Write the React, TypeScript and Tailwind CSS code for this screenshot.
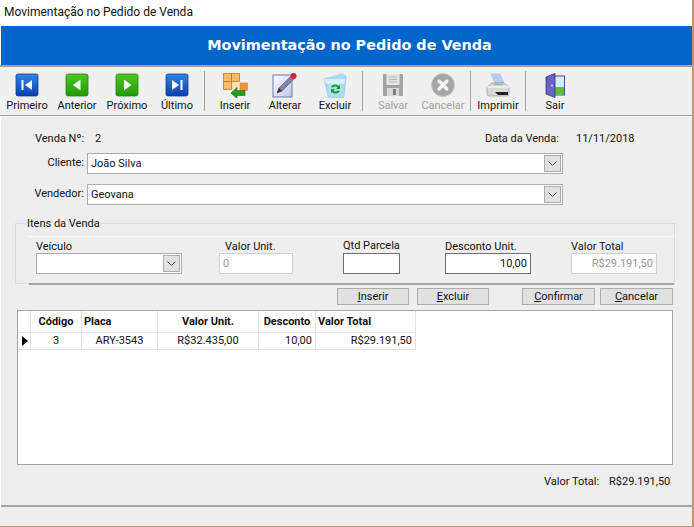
import type { ReactNode } from 'react';

const Nav = ({ color, dir }: { color: 'blue' | 'green'; dir: 'first' | 'prev' | 'next' | 'last' }) => {
  const id = color + dir;
  const top = color === 'blue' ? '#2f86e6' : '#4fc81e';
  const bottom = color === 'blue' ? '#0a3fb0' : '#1f9a08';
  const edge = color === 'blue' ? '#123f8e' : '#2a7f14';
  return (
    <svg width="24" height="24" viewBox="0 0 24 24">
      <defs>
        <linearGradient id={id} x1="0" y1="0" x2="0" y2="1">
          <stop offset="0" stopColor={top} />
          <stop offset="1" stopColor={bottom} />
        </linearGradient>
      </defs>
      <rect x="1" y="1" width="22" height="22" rx="2" fill={`url(#${id})`} stroke={edge} strokeWidth="0.8" />
      {dir === 'first' && <path d="M6.500 7h2v10h-2zM17 7v10l-7-5z" fill="#fff" />}
      {dir === 'prev' && <path d="M15.500 6.500v11L8 12z" fill="#f2fff0" />}
      {dir === 'next' && <path d="M9 6.500v11l7.500-5.500z" fill="#f2fff0" />}
      {dir === 'last' && <path d="M7 7v10l7-5zM15.500 7h2v10h-2z" fill="#fff" />}
    </svg>
  );
};

const InserirIcon = () => (
  <svg width="25" height="25" viewBox="0 0 25 25">
    <path d="M0.500 0.500h8v8h-8zM8.500 0.500h8v8h-8zM0.500 8.500h8v8h-8z" fill="#f8bc68" stroke="#b5772a" strokeWidth="0.8" />
    <rect x="9" y="9" width="7" height="7" fill="#fce0b0" />
    <rect x="17" y="10" width="7.500" height="7.500" fill="#ef9431" stroke="#d8842a" strokeWidth="0.6" />
    <path d="M8 20l6-5.500v3h8v5h-8v3z" fill="#2c9a22" stroke="#146a10" strokeWidth="0.6" />
  </svg>
);

const AlterarIcon = () => (
  <svg width="26" height="26" viewBox="0 0 26 26">
    <defs>
      <linearGradient id="sheet" x1="0" y1="0" x2="1" y2="1">
        <stop offset="0" stopColor="#fdfdff" />
        <stop offset="1" stopColor="#b8c8ec" />
      </linearGradient>
    </defs>
    <rect x="1" y="3" width="19" height="22" fill="url(#sheet)" stroke="#6a7aa8" />
    <path d="M5 21l2-5L19 4l3 3L10 19z" fill="#8c7fa8" stroke="#5a5070" strokeWidth="0.6" />
    <path d="M5 21l2-5 3 3z" fill="#3d3020" />
    <circle cx="21.500" cy="4" r="3" fill="#d8262a" />
  </svg>
);

const ExcluirIcon = () => (
  <svg width="24" height="25" viewBox="0 0 24 25">
    <path d="M1 6l18-5 4 2-2 20a2 2 0 0 1-2 2H7a2 2 0 0 1-2-2z" fill="#a9dcf5" stroke="#8cc4e4" strokeWidth="0.6" />
    <path d="M1 6h21l-1 5H3z" fill="#d6f0fb" />
    <path d="M8 14a5 5 0 0 1 8-1l1-1v4h-4l1.500-1.500a3 3 0 0 0-4.500 0z" fill="#1e9a2a" />
    <path d="M17 18a5 5 0 0 1-8 1l-1 1v-4h4l-1.500 1.500a3 3 0 0 0 4.500 0z" fill="#1e9a2a" />
  </svg>
);

const SalvarIcon = () => (
  <svg width="22" height="24" viewBox="0 0 22 24">
    <path d="M1 2a1 1 0 0 1 1-1h18a1 1 0 0 1 1 1v20a1 1 0 0 1-1 1H2a1 1 0 0 1-1-1z" fill="#a3a3a3" />
    <rect x="4.500" y="1" width="13" height="11" fill="#e4e4e4" />
    <path d="M7 4h8M7 6.500h8M7 9h8" stroke="#b5b5b5" />
    <rect x="5" y="15" width="12" height="8" fill="#d8d8d8" />
    <rect x="11" y="16" width="3" height="6" fill="#808080" />
  </svg>
);

const CancelarIcon = () => (
  <svg width="24" height="24" viewBox="0 0 24 24">
    <circle cx="12" cy="12" r="11.500" fill="#a6a6a6" stroke="#c8c8c8" />
    <path d="M8 8l8 8M16 8l-8 8" stroke="#f4f4f4" strokeWidth="3.200" strokeLinecap="round" />
  </svg>
);

const ImprimirIcon = () => (
  <svg width="24" height="25" viewBox="0 0 24 25">
    <path d="M5 1l9 0 4 9H9z" fill="#b9cdf2" stroke="#9db4e0" strokeWidth="0.5" />
    <path d="M1 14l5-4h12l5 4v7a2 2 0 0 1-2 2H3a2 2 0 0 1-2-2z" fill="#d8d8d8" stroke="#8a8a8a" strokeWidth="0.6" />
    <path d="M1 14h22" stroke="#f4f4f4" strokeWidth="1.500" />
    <path d="M9 19h13v3H12z" fill="#222" />
    <rect x="8" y="10.500" width="9" height="1.500" fill="#7fcf8a" />
  </svg>
);

const SairIcon = () => (
  <svg width="20" height="25" viewBox="0 0 20 25">
    <rect x="9" y="3" width="10.500" height="19" fill="#cfeffa" stroke="#4c4c8c" />
    <rect x="10" y="14" width="9" height="7.500" fill="#62c22c" />
    <path d="M1 4l9-3.500v24L1 21z" fill="#6a62c6" stroke="#35307a" strokeWidth="0.8" />
    <circle cx="7" cy="12.500" r="1" fill="#e8e8ff" />
  </svg>
);

const ToolButton = ({ label, icon, off }: { label: string; icon: ReactNode; off?: boolean }) => (
  <div className={`w-[50px] h-full flex flex-col items-center ${off ? 'text-[#a0a0a0]' : 'text-[#111]'}`}>
    <div className="h-[28px] mt-[4px] flex items-center justify-center">{icon}</div>
    <span className="text-[11px] leading-[13px] mt-0 whitespace-nowrap">{label}</span>
  </div>
);

const Sep = () => <div className="w-px h-[40px] bg-[#a0a0a0] mt-[4px] mx-[2px]" />;

const Combo = ({ value, className }: { value: string; className: string }) => (
  <div className={`flex items-center border border-[#acacac] bg-white ${className}`}>
    <span className="flex-1 pl-[3px] pt-[2px] text-[11px] text-[#111]">{value}</span>
    <div className="w-[17px] h-[17px] mr-[1px] border border-[#acacac] bg-[#e1e1e1] flex items-center justify-center">
      <svg width="9" height="5" viewBox="0 0 9 5" fill="none">
        <path d="M0.500 0.500l4 4 4-4" stroke="#444" />
      </svg>
    </div>
  </div>
);

const Btn = ({ u, rest, className }: { u: string; rest: string; className: string }) => (
  <div className={`h-[17px] border border-[#adadad] bg-[#e1e1e1] text-[11px] leading-[15px] text-[#111] text-center ${className}`}>
    <span className="underline">{u}</span>
    {rest}
  </div>
);

const Th = ({ w, children, left }: { w: string; children: string; left?: boolean }) => (
  <div className={`${w} h-full border-r border-[#e3e3e3] font-bold text-[11px] leading-[22px] text-[#111] ${left ? 'pl-[2px]' : 'text-center'}`}>
    {children}
  </div>
);

const Td = ({ w, children, right }: { w: string; children: string; right?: boolean }) => (
  <div className={`${w} h-full border-r border-[#e3e3e3] text-[11px] leading-[16px] text-[#111] ${right ? 'text-right pr-[3px]' : 'text-center'}`}>
    {children}
  </div>
);

export default function App() {
  return (
    <div className="w-[694px] h-[527px] flex flex-col overflow-hidden bg-white border-r-2 border-b border-[#c8946c] font-['Roboto','Liberation_Sans',sans-serif]">
      <div className="h-[26px] pl-[4px] text-[12px] leading-[24px] text-[#111]">Movimentação no Pedido de Venda</div>

      <div className="h-[39px] ml-[1px] pl-[6px] bg-[#0066cc] flex items-center justify-center text-white font-bold text-[14.4px] font-['DejaVu_Sans',sans-serif]">
        Movimentação no Pedido de Venda
      </div>

      <div className="h-[51px] flex pl-[2px] bg-[#f0f0f0] border-t-2 border-b border-t-[#a0a0a0] border-b-[#a0a0a0]">
        <ToolButton label="Primeiro" icon={<Nav color="blue" dir="first" />} />
        <ToolButton label="Anterior" icon={<Nav color="green" dir="prev" />} />
        <ToolButton label="Próximo" icon={<Nav color="green" dir="next" />} />
        <ToolButton label="Último" icon={<Nav color="blue" dir="last" />} />
        <Sep />
        <div className="w-[3px]" />
        <ToolButton label="Inserir" icon={<InserirIcon />} />
        <ToolButton label="Alterar" icon={<AlterarIcon />} />
        <ToolButton label="Excluir" icon={<ExcluirIcon />} />
        <Sep />
        <div className="w-[3px]" />
        <ToolButton label="Salvar" icon={<SalvarIcon />} off />
        <ToolButton label="Cancelar" icon={<CancelarIcon />} off />
        <Sep />
        <ToolButton label="Imprimir" icon={<ImprimirIcon />} />
        <Sep />
        <div className="w-[2px]" />
        <ToolButton label="Sair" icon={<SairIcon />} />
      </div>

      <div className="h-[390px] ml-[1px] mt-[1px] bg-[#eeeeee] border-b-2 border-[#a5a5a5] flex flex-col text-[11px] text-[#111]">
        <div className="flex h-[16px] mt-[14px] leading-[16px]">
          <span className="ml-[34px] w-[60px]">Venda Nº:</span>
          <span className="w-[390px]">2</span>
          <span className="w-[91px]">Data da Venda:</span>
          <span>11/11/2018</span>
        </div>

        <div className="flex items-center mt-[6px]">
          <span className="w-[83px] text-right">Cliente:</span>
          <Combo value="João Silva" className="ml-[3px] w-[476px] h-[21px]" />
        </div>
        <div className="flex items-center mt-[10px]">
          <span className="w-[83px] text-right">Vendedor:</span>
          <Combo value="Geovana" className="ml-[3px] w-[476px] h-[21px]" />
        </div>

        <div className="relative mt-[18px] ml-[14px] w-[660px] h-[61px] border border-[#dcdcdc]">
          <span className="absolute left-[10px] -top-[7px] px-[1px] bg-[#eeeeee] leading-[14px]">Itens da Venda</span>
          <div className="ml-[13px] mt-[12px] h-[49px] border-t border-white border-b-2 border-b-[#a5a5a5] flex">
            <div className="ml-[7px] w-[146px] flex flex-col">
              <span className="leading-[13px] mt-[3px]">Veículo</span>
              <Combo value="" className="w-[146px] h-[21px]" />
            </div>
            <div className="ml-[37px] w-[74px] flex flex-col">
              <span className="leading-[13px] mt-[3px] pl-[6px]">Valor Unit.</span>
              <div className="h-[21px] border border-[#d0d0d0] bg-white pl-[3px] text-[#999] leading-[19px]">0</div>
            </div>
            <div className="ml-[50px] w-[57px] flex flex-col">
              <span className="leading-[14px] mt-[2px] whitespace-nowrap">Qtd Parcela</span>
              <div className="h-[21px] border border-[#707070] bg-white" />
            </div>
            <div className="ml-[45px] w-[86px] flex flex-col">
              <span className="leading-[13px] mt-[3px] whitespace-nowrap">Desconto Unit.</span>
              <div className="h-[21px] border border-[#707070] bg-white pr-[3px] text-right leading-[19px]">10,00</div>
            </div>
            <div className="ml-[40px] w-[86px] flex flex-col">
              <span className="leading-[13px] mt-[3px] whitespace-nowrap">Valor Total</span>
              <div className="h-[21px] border border-[#d0d0d0] bg-white pr-[3px] text-right text-[#999] leading-[19px]">R$29.191,50</div>
            </div>
          </div>
        </div>

        <div className="flex mt-[4px]">
          <Btn u="I" rest="nserir" className="ml-[336px] w-[72px]" />
          <Btn u="E" rest="xcluir" className="ml-[8px] w-[72px]" />
          <Btn u="C" rest="onfirmar" className="ml-[33px] w-[73px]" />
          <Btn u="C" rest="ancelar" className="ml-[5px] w-[73px]" />
        </div>

        <div className="mt-[5px] ml-[16px] w-[656px] h-[155px] bg-white border border-[#a5a5a5] flex flex-col">
          <div className="flex h-[22px] border-b border-[#e3e3e3] w-[398px]">
            <div className="w-[13px] h-full border-r border-[#e3e3e3]" />
            <Th w="w-[51px]">Código</Th>
            <Th w="w-[76px]" left>Placa</Th>
            <Th w="w-[101px]">Valor Unit.</Th>
            <Th w="w-[57px]">Desconto</Th>
            <Th w="w-[100px]" left>Valor Total</Th>
          </div>
          <div className="flex h-[17px] border-b border-[#e3e3e3] w-[398px]">
            <div className="w-[13px] h-full border-r border-[#e3e3e3] flex items-center pl-[4px]">
              <svg width="6" height="10" viewBox="0 0 6 10">
                <path d="M0 0l6 5-6 5z" fill="#000" />
              </svg>
            </div>
            <Td w="w-[51px]">3</Td>
            <Td w="w-[76px]">ARY-3543</Td>
            <Td w="w-[101px]">R$32.435,00</Td>
            <Td w="w-[57px]" right>10,00</Td>
            <Td w="w-[100px]" right>R$29.191,50</Td>
          </div>
        </div>

        <div className="flex mt-[9px] leading-[16px]">
          <span className="ml-[543px] w-[65px]">Valor Total:</span>
          <span>R$29.191,50</span>
        </div>
      </div>

      <div className="flex-1 bg-[#eeeeee]" />
    </div>
  );
}
